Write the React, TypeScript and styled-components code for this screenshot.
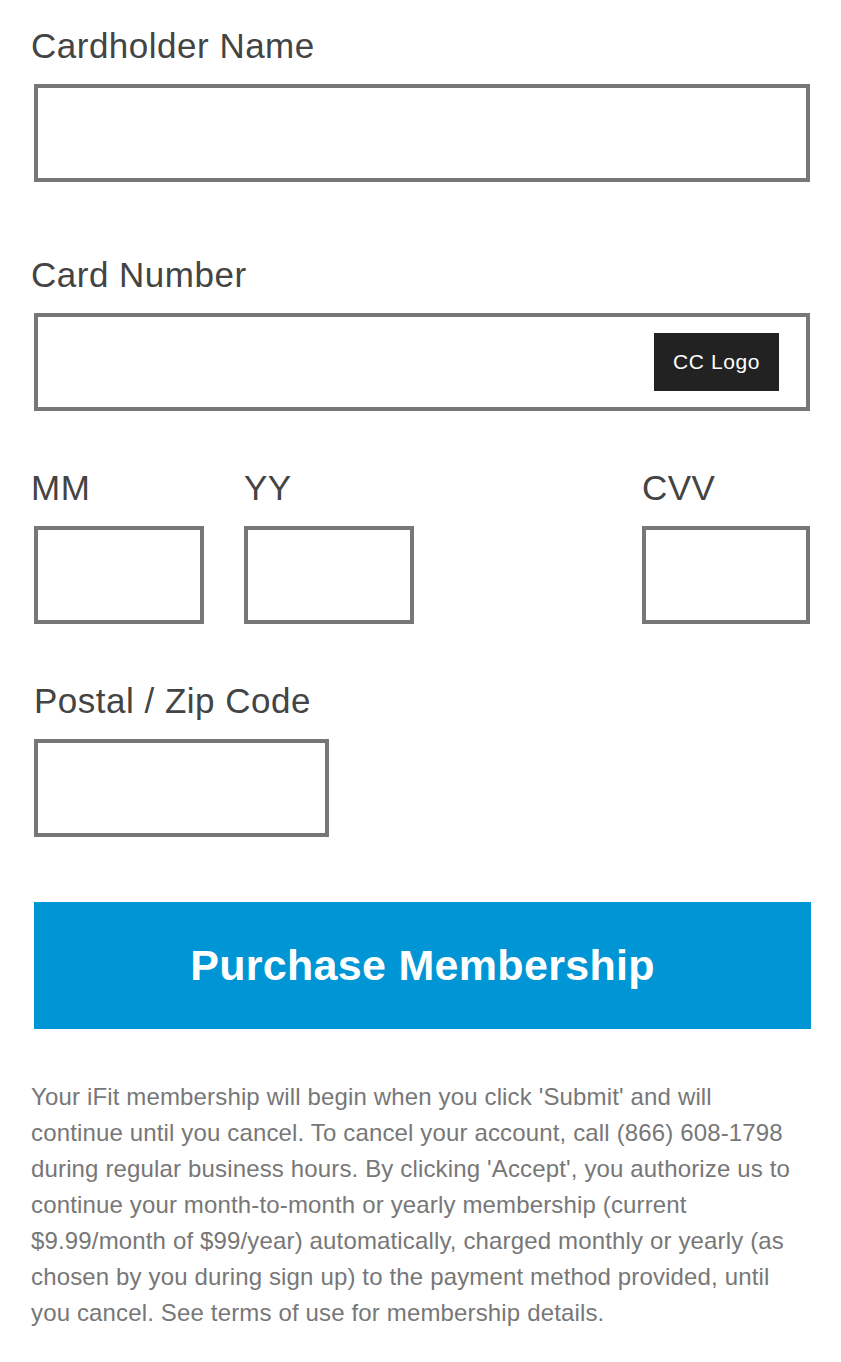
import React from "react";
import styled, { createGlobalStyle } from "styled-components";

const Global = createGlobalStyle`
  html, body { margin: 0; padding: 0; background: #fff; }
  body { font-family: "Liberation Sans", Arial, Helvetica, sans-serif; }
  * { box-sizing: border-box; }
`;

const Form = styled.form`
  display: flex;
  flex-direction: column;
  padding: 26px 31px 40px 31px;
  width: 841px;
`;

const Field = styled.div<{ $mt?: number }>`
  display: flex;
  flex-direction: column;
  margin-top: ${(p) => p.$mt ?? 0}px;
`;

const Label = styled.label<{ $indent?: number }>`
  font-size: 35px;
  line-height: 40px;
  letter-spacing: 0.5px;
  color: #444;
  padding-left: ${(p) => p.$indent ?? 0}px;
  margin-bottom: 18px;
  white-space: nowrap;
`;

const Box = styled.div<{ $w?: number }>`
  margin-left: 3px;
  width: ${(p) => (p.$w ? `${p.$w}px` : "776px")};
  height: 98px;
  border: 4px solid #777;
  background: #fff;
  display: flex;
  align-items: center;
  justify-content: flex-end;
  padding-right: 27px;
`;

const Logo = styled.div`
  width: 125px;
  height: 58px;
  background: #222;
  color: #fff;
  font-size: 21px;
  letter-spacing: 0.6px;
  display: flex;
  align-items: center;
  justify-content: center;
`;

const Row = styled.div`
  display: flex;
  justify-content: space-between;
  margin-top: 57px;
  width: 779px;
`;

const Left = styled.div`
  display: flex;
  gap: 37px;
`;

const SmallField = styled.div<{ $first?: boolean }>`
  display: flex;
  flex-direction: column;
  & > label {
    padding-left: ${(p) => (p.$first ? 0 : 3)}px;
  }
`;

const Button = styled.button`
  margin-top: 65px;
  margin-left: 3px;
  width: 777px;
  height: 127px;
  border: none;
  background: #0096d6;
  color: #fff;
  font-family: "Liberation Sans", Arial, Helvetica, sans-serif;
  font-weight: 700;
  font-size: 43px;
  letter-spacing: 0.3px;
  padding: 0;
  cursor: pointer;
`;

const Note = styled.p`
  margin: 50px 0 0 0;
  width: 772px;
  font-size: 24px;
  line-height: 36px;
  letter-spacing: 0.15px;
  color: #777;
`;

export default function App() {
  return (
    <>
      <Global />
      <Form onSubmit={(e) => e.preventDefault()}>
        <Field>
          <Label>Cardholder Name</Label>
          <Box />
        </Field>
        <Field $mt={73}>
          <Label>Card Number</Label>
          <Box>
            <Logo>CC Logo</Logo>
          </Box>
        </Field>
        <Row>
          <Left>
            <SmallField $first>
              <Label>MM</Label>
              <Box $w={170} />
            </SmallField>
            <SmallField>
              <Label>YY</Label>
              <Box $w={170} />
            </SmallField>
          </Left>
          <SmallField>
            <Label>CVV</Label>
            <Box $w={168} />
          </SmallField>
        </Row>
        <Field $mt={57}>
          <Label $indent={3}>Postal / Zip Code</Label>
          <Box $w={295} />
        </Field>
        <Button type="submit">Purchase Membership</Button>
        <Note>
          Your iFit membership will begin when you click 'Submit' and will continue until you cancel. To cancel your
          account, call (866) 608-1798 during regular business hours. By clicking 'Accept', you authorize us to
          continue your month-to-month or yearly membership (current $9.99/month of $99/year) automatically, charged
          monthly or yearly (as chosen by you during sign up) to the payment method provided, until you cancel. See
          terms of use for membership details.
        </Note>
      </Form>
    </>
  );
}
